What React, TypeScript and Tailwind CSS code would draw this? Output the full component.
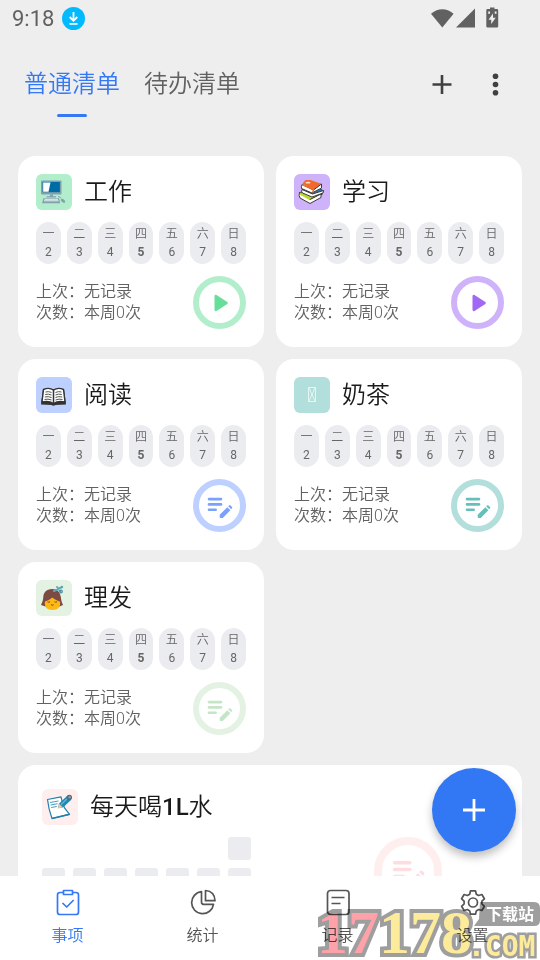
import type { ReactNode } from "react";
import clsx from "clsx";

const WEEK = [
    ["一", 2],
    ["二", 3],
    ["三", 4],
    ["四", 5],
    ["五", 6],
    ["六", 7],
    ["日", 8],
] as const;
const TODAY = 5;

function ComputerIcon() {
    return (
        <svg viewBox="0 0 36 36" className="size-9" aria-hidden="true">
            <rect x="5" y="6.5" width="20.5" height="14" rx="1" fill="#82a0ad" />
            <rect x="6.6" y="8" width="17.3" height="10.2" fill="#006ca6" />
            <path d="M7.2 8.4h7.3l-2 9.4H7.2z" fill="#fff" />
            <path d="M14 20.5h3v1.7h3v1.4h-9.500v-1.400h3.500z" fill="#82a0ad" />
            <path d="M7.500 24.200h15.500l1.200 5H6z" fill="#82a0ad" />
            <path d="M8.500 25.300h13.500M8 26.800h14.500" stroke="#e8f4f2" strokeWidth="1" />
            <path d="M22 22.500q2 0 3 2" stroke="#82a0ad" fill="none" />
            <ellipse cx="27" cy="26.800" rx="2.500" ry="1.500" transform="rotate(35 27 26.800)" fill="#82a0ad" />
        </svg>
    );
}

function BooksIcon() {
    return (
        <svg viewBox="0 0 36 36" className="size-9" aria-hidden="true">
            <g stroke="#3b3b3b" strokeWidth="1" strokeLinejoin="round">
                <path d="M5.500 18.500l14-2 9 3.500-12.500 5.500z" fill="#bfd730" />
                <path d="M5.500 18.500q-1 3.500.5 5.500l10 5.500 11-6v-3.500l-11 5.500z" fill="#fff" />
                <path d="M6 19.500l10 5.500" stroke="#bfd730" strokeWidth="2" />
                <path d="M8 15l12-4 9.500 6-11 4.500z" fill="#2a76a8" />
                <path d="M8 15.500q-1 2 .5 3.500l9.500 4 11-4 .5-2.500-11 3.500z" fill="#fff" />
                <path d="M8.500 9.500l3-3.500h5l11.500 4-8 6z" fill="#f26a2b" stroke="none" />
                <path d="M8 10.500q-1 2-.5 4l10.500 4.500 9.500-5V10l-8 6z" fill="#fff" />
                <path d="M8.500 10.500l11 5-.8 3" fill="none" stroke="#f26a2b" strokeWidth="1.500" />
            </g>
            <ellipse cx="14" cy="8.700" rx="2.500" ry=".9" fill="#ffd9c6" />
        </svg>
    );
}

function OpenBookIcon() {
    return (
        <svg viewBox="0 0 36 36" className="size-9" aria-hidden="true">
            <path d="M7 12L5 27.500l10.500.5q2 1.500 4 0L30 27.500 28 12z" fill="#333" />
            <path
                d="M7.500 12.500q5.500-2.500 10 .5 4.500-3 10-.5L29 25q-7-1.500-11.500 1.500Q13 23.500 6 25z"
                fill="#fff"
                stroke="#333"
                strokeWidth="1.400"
            />
            <path d="M17.500 13v13" stroke="#333" strokeWidth="1.500" />
            <path
                d="M9.500 15q3-1 6 .5M9.200 17.500q3-1 6.300.5M8.800 20q3.500-1 6.700.5M8.500 22.500q3.500-1 7 .5M19.500 15.500q3-1.500 6-.5M19.500 18q3-1.500 6.300-.5M19.500 20.500q3-1.500 6.700-.5M19.500 23q3.500-1.500 7-.5"
                stroke="#555"
                strokeWidth="1"
                fill="none"
            />
        </svg>
    );
}

function MissingIcon() {
    return (
        <svg viewBox="0 0 36 36" className="size-9" aria-hidden="true">
            <path d="M14.500 10.500h7v14h-7zM15 11l6 13M21 11l-6 13" fill="none" stroke="#fff" strokeOpacity=".85" strokeWidth=".8" />
        </svg>
    );
}

function HaircutIcon() {
    return (
        <svg viewBox="0 0 36 36" className="size-9" aria-hidden="true">
            <path d="M16 9C10 9 7.500 13 7.300 17c-.2 3-1 5.500-2.300 8l4.500 1.500h14l3.500-1.500c-1.300-2.500-1.800-5-2.200-8C24 12 21.500 9 16 9z" fill="#7b4a43" />
            <path d="M9 21.500c2.500-.7 5-2 7.500-4 1.800 1.800 4.500 3.200 7.500 4 1 5-2 8.500-7.500 8.500S8 26.500 9 21.500z" fill="#fdb813" />
            <path d="M11.500 21.800q1.300.8 2.600 0M18.500 21.800q1.300.8 2.600 0M15 24.800q1.300.8 2.600 0" fill="none" stroke="#7b4a23" strokeWidth="1" />
            <path d="M18 11l8-4M21 7l3.500 4.500" stroke="#62a8b5" strokeWidth="2" strokeLinecap="round" />
            <circle cx="25" cy="11.500" r="1.300" fill="none" stroke="#4b8fa3" strokeWidth="1.200" />
            <circle cx="26" cy="7" r="1.200" fill="#62a8b5" />
        </svg>
    );
}

function MemoIcon() {
    return (
        <svg viewBox="0 0 36 36" className="size-9" aria-hidden="true">
            <path
                d="M5.500 10.500L19 7.800q1 6 3.500 11l5 6.500-17.500 4.200Q6.500 20 5.500 10.500z"
                fill="#fff"
                stroke="#1f81ab"
                strokeWidth="1.200"
                strokeLinejoin="round"
            />
            <path d="M8 13.500l8.500-1.500M8.500 16l7-1.300M9.200 18.500l5.500-1" stroke="#4c9abc" strokeWidth="1" />
            <path d="M10 29.500l17.500-4.200" stroke="#1f81ab" strokeWidth="1.600" />
            <path d="M17 14.500l8-7.500 4 4-8 7.500-5 .8z" fill="#2389b3" />
            <path d="M17 14.500l4 4-5 .8z" fill="#f5c396" />
            <path d="M19 15.500l7.500-7" stroke="#62b8d6" strokeWidth="1.200" />
            <circle cx="27.300" cy="8.500" r="2.700" fill="#38728b" />
            <circle cx="27.600" cy="8.200" r="1.200" fill="#c78e70" />
        </svg>
    );
}

function PlayGlyph() {
    return (
        <svg viewBox="0 0 53 53" className="size-full" fill="currentColor" aria-hidden="true">
            <path d="M21.500 20.200v13.600q.2 2 2 1.200l10.800-7q1.300-1 0-2l-10.800-7q-1.800-.8-2 1.200z" />
        </svg>
    );
}

function NoteGlyph() {
    return (
        <svg viewBox="0 0 53 53" className="size-full" fill="currentColor" aria-hidden="true">
            <rect x="14.700" y="18.700" width="14.600" height="2.700" rx="1.300" />
            <rect x="14.700" y="24" width="14.600" height="2.700" rx="1.300" />
            <rect x="14.700" y="29.400" width="9.300" height="2.700" rx="1.300" />
            <path d="M26.700 38.200v-2.400l7.600-7.600 3.100 3.100-7.600 7.600h-2.200q-.9 0-.9-.7z" />
            <path d="M35.200 27.300l.9-.9q.7-.6 1.400 0l1.500 1.500q.6.700 0 1.400l-.9.900z" />
        </svg>
    );
}

type Item = {
    title: string;
    icon: ReactNode;
    tile: string;
    ring: string;
    kind: "play" | "note";
};

const ITEMS: Item[] = [
    { title: "工作", icon: <ComputerIcon />, tile: "bg-[#b2eecc]", ring: "border-[#b2eecc] text-[#67df9a]", kind: "play" },
    { title: "学习", icon: <BooksIcon />, tile: "bg-[#cfb3fa]", ring: "border-[#cfb3fa] text-[#a068f5]", kind: "play" },
    { title: "阅读", icon: <OpenBookIcon />, tile: "bg-[#bdd0ff]", ring: "border-[#bdd0ff] text-[#7ba1ff]", kind: "note" },
    { title: "奶茶", icon: <MissingIcon />, tile: "bg-[#b2dfdb]", ring: "border-[#b2dfdb] text-[#66c0b9]", kind: "note" },
    { title: "理发", icon: <HaircutIcon />, tile: "bg-[#e3f2e3]", ring: "border-[#e3f2e3] text-[#c5e6c6]", kind: "note" },
];

function ItemCard({ item }: { item: Item }) {
    return (
        <article className="flex flex-col gap-3 rounded-[18px] bg-white p-[18px]">
            <div className="flex items-center gap-3">
                <span className={clsx("size-9 shrink-0 rounded-md", item.tile)}>{item.icon}</span>
                <h2 className="text-[24px] leading-9 font-[350] text-[#1a1a1a]">{item.title}</h2>
            </div>
            <ul className="flex gap-1.5">
                {WEEK.map(([day, date]) => (
                    <li
                        key={date}
                        className="flex flex-1 flex-col items-center rounded-full bg-[#ebecf0] pt-[3px] pb-0.5 text-[12px] text-[#666]"
                    >
                        <span className="leading-[18px] font-[350]">{day}</span>
                        <span className={clsx("leading-[19px]", date === TODAY && "font-bold")}>{date}</span>
                    </li>
                ))}
            </ul>
            <div className="flex items-center justify-between">
                <div className="pb-0.5 text-[16px] leading-[21px] font-[350] text-[#616161]">
                    <p>上次：无记录</p>
                    <p>次数：本周0次</p>
                </div>
                <button
                    type="button"
                    aria-label={item.title}
                    className={clsx("grid size-[53px] shrink-0 place-items-center rounded-full border-[6px]", item.ring)}
                >
                    <span className="-m-1.5 size-[53px]">{item.kind === "play" ? <PlayGlyph /> : <NoteGlyph />}</span>
                </button>
            </div>
        </article>
    );
}

function HabitCard() {
    return (
        <article className="col-span-2 flex flex-col gap-3 rounded-[18px] bg-white p-6">
            <div className="flex items-center gap-3">
                <span className="size-9 shrink-0 rounded-md bg-[#ffeeee]">
                    <MemoIcon />
                </span>
                <h2 className="text-[24px] leading-9 font-medium text-[#1a1a1a]">
                    <span className="font-[350]">每天喝</span>1L<span className="font-[350]">水</span>
                </h2>
            </div>
            <div className="flex">
                <div className="grid shrink-0 grid-cols-7 gap-2">
                    {Array.from({ length: 22 }, (_, i) => (
                        <span key={i} className={clsx("size-[23px] rounded-[3px] bg-[#ebecf0]", i === 0 && "col-start-7")} />
                    ))}
                </div>
                <div className="flex flex-1 justify-center pl-[67px]">
                    <button
                        type="button"
                        aria-label="每天喝1L水"
                        className="grid size-[68px] place-items-center rounded-full border-8 border-[#ffeeee] text-[#ffdcde]"
                    >
                        <span className="-m-2 size-[68px]">
                            <NoteGlyph />
                        </span>
                    </button>
                </div>
            </div>
        </article>
    );
}

function StatusBar() {
    return (
        <div className="flex h-9 items-center justify-between pr-10 pl-3 text-[#616161]">
            <div className="flex items-center gap-2">
                <span className="pt-0.5 text-[22px] leading-9">9:18</span>
                <svg viewBox="0 0 23 23" className="size-[23px]" aria-hidden="true">
                    <circle cx="11.500" cy="11.500" r="11.500" fill="#00baff" />
                    <path d="M11.500 5v8.500M7.700 10l3.800 3.800 3.800-3.800M7.500 16.800h8" fill="none" stroke="#fff" strokeWidth="1.800" />
                </svg>
            </div>
            <svg viewBox="0 0 70 22" className="h-[22px] w-[70px]" fill="#616161" aria-hidden="true">
                <path d="M1 6.700Q12.300-2.100 23.600 6.700L12.300 20.500z" />
                <path d="M45 1.500v19H26z" />
                <path
                    fillRule="evenodd"
                    d="M60 .500h4.500V2H67q1.200 0 1.200 1.200v16.100q0 1.200-1.200 1.200H57.500q-1.200 0-1.200-1.200V3.200q0-1.200 1.200-1.200H60zM63 6.500l-4.500 6.200h2.700V17l4.500-6.300H63zM58.200 4.500v2.200h1.800V4.500zM64.700 4.500v2.200h1.800V4.500z"
                />
            </svg>
        </div>
    );
}

function ClipboardIcon() {
    return (
        <path d="M8 3.500H5Q2.500 3.500 2.500 6v17Q2.500 25.500 5 25.500h16q2.500 0 2.500-2.500V6q0-2.500-2.500-2.500h-3M8.500 1.500h9v4h-9zM7.500 14l4.200 4 7-7" />
    );
}

function PieIcon() {
    return (
        <>
            <path d="M11.500 2.700A11 11 0 1 0 23.500 15.300H13.500Q11.500 15.300 11.500 13z" />
            <path d="M15.500 1.500q9.200.8 9.500 10.200H15.500z" />
        </>
    );
}

function RecordIcon() {
    return (
        <>
            <rect x="2.500" y="1.500" width="21.500" height="24" rx="3" />
            <path d="M6.500 8.500h13M6.500 14.500h9" />
        </>
    );
}

function GearIcon() {
    return (
        <>
            <path d="M10.500 1.800h5l.8 3.400 2.300 1.300 3.300-1 2.500 4.300-2.500 2.400v2.700l2.500 2.400-2.500 4.200-3.300-1-2.300 1.400-.8 3.300h-5l-.8-3.300-2.300-1.400-3.300 1-2.500-4.200 2.500-2.400v-2.700L1.600 9.800l2.500-4.300 3.300 1 2.300-1.300z" />
            <circle cx="13" cy="13.500" r="4.500" />
        </>
    );
}

const NAV = [
    { label: "事项", icon: <ClipboardIcon /> },
    { label: "统计", icon: <PieIcon /> },
    { label: "记录", icon: <RecordIcon /> },
    { label: "设置", icon: <GearIcon /> },
];

function SiteMark() {
    return (
        <svg
            viewBox="0 0 224 62"
            className="pointer-events-none absolute right-0 bottom-0 h-[62px] w-[224px] mix-blend-multiply"
            aria-hidden="true"
        >
            <g stroke="#9e9e9e" strokeLinejoin="miter" paintOrder="stroke">
                <text x="1" y="55" className="font-['Liberation_Serif'] text-[62px] font-bold" fill="#fdeb9c" strokeWidth="8">
                    <tspan fill="#ffa1a8">17</tspan>178
                </text>
                <text x="152" y="58" className="font-['DejaVu_Sans_Mono'] text-[28px] font-bold" fill="#fdeb9c" strokeWidth="5">
                    .COM
                </text>
            </g>
            <path d="M164 4h54q6 0 6 6v12q0 6-6 6h-60l5-7z" fill="#9e9e9e" />
            <text x="170" y="22" className="text-[16px] font-bold" fill="#fff">
                下载站
            </text>
        </svg>
    );
}

export default function App() {
    return (
        <div className="flex h-screen flex-col bg-[#eee] font-[Roboto,'Noto_Sans_CJK_SC',sans-serif]">
            <StatusBar />
            <header className="flex h-[120px] shrink-0 items-start justify-between pt-7 pr-9 pl-6">
                <div role="tablist" className="flex gap-6 text-[24px] leading-10 font-[350]">
                    <button type="button" role="tab" aria-selected="true" className="flex flex-col items-center gap-2.5 text-[#3478f6]">
                        普通清单
                        <span className="h-[3px] w-[30px] rounded-full bg-[#3478f6]" />
                    </button>
                    <button type="button" role="tab" aria-selected="false" className="self-start text-[#616161]">
                        待办清单
                    </button>
                </div>
                <div className="flex gap-[30px] pt-1 text-[#404040]">
                    <button type="button" aria-label="添加">
                        <svg viewBox="0 0 32 32" className="size-8" stroke="currentColor" strokeWidth="2.600" aria-hidden="true">
                            <path d="M16 7v19M6.500 16.500h19" />
                        </svg>
                    </button>
                    <button type="button" aria-label="更多">
                        <svg viewBox="0 0 16 32" className="h-8 w-4" fill="currentColor" aria-hidden="true">
                            <circle cx="7.500" cy="8.300" r="2.800" />
                            <circle cx="7.500" cy="16.500" r="2.800" />
                            <circle cx="7.500" cy="24.700" r="2.800" />
                        </svg>
                    </button>
                </div>
            </header>

            <div className="relative min-h-0 flex-1">
                <main className="h-full overflow-y-auto px-[18px] [scrollbar-width:none]">
                    <div className="grid grid-cols-2 gap-3 pb-6">
                        {ITEMS.map((item) => (
                            <ItemCard key={item.title} item={item} />
                        ))}
                        <HabitCard />
                    </div>
                </main>
                <button
                    type="button"
                    aria-label="新建"
                    className="absolute right-6 bottom-6 grid size-[84px] place-items-center rounded-full bg-[#3277f4] shadow-[0_5px_9px_rgba(0,0,0,0.25)]"
                >
                    <svg viewBox="0 0 22 22" className="size-[22px]" stroke="#fff" strokeWidth="2.800" aria-hidden="true">
                        <path d="M11 0v22M0 11h22" />
                    </svg>
                </button>
            </div>

            <nav className="relative bg-white">
                <div className="grid h-[84px] grid-cols-4">
                    {NAV.map((entry, i) => (
                        <a
                            key={entry.label}
                            href="#"
                            className={clsx("flex flex-col items-center gap-1.5 pt-[13px]", i === 0 ? "text-[#3478f6]" : "text-[#555]")}
                        >
                            <svg
                                viewBox="0 0 26 27"
                                className="h-[27px] w-[26px]"
                                fill="none"
                                stroke="currentColor"
                                strokeWidth="1.700"
                                strokeLinejoin="round"
                                aria-hidden="true"
                            >
                                {entry.icon}
                            </svg>
                            <span className="text-[16px] leading-7 font-[350]">{entry.label}</span>
                        </a>
                    ))}
                </div>
                <SiteMark />
            </nav>
        </div>
    );
}
